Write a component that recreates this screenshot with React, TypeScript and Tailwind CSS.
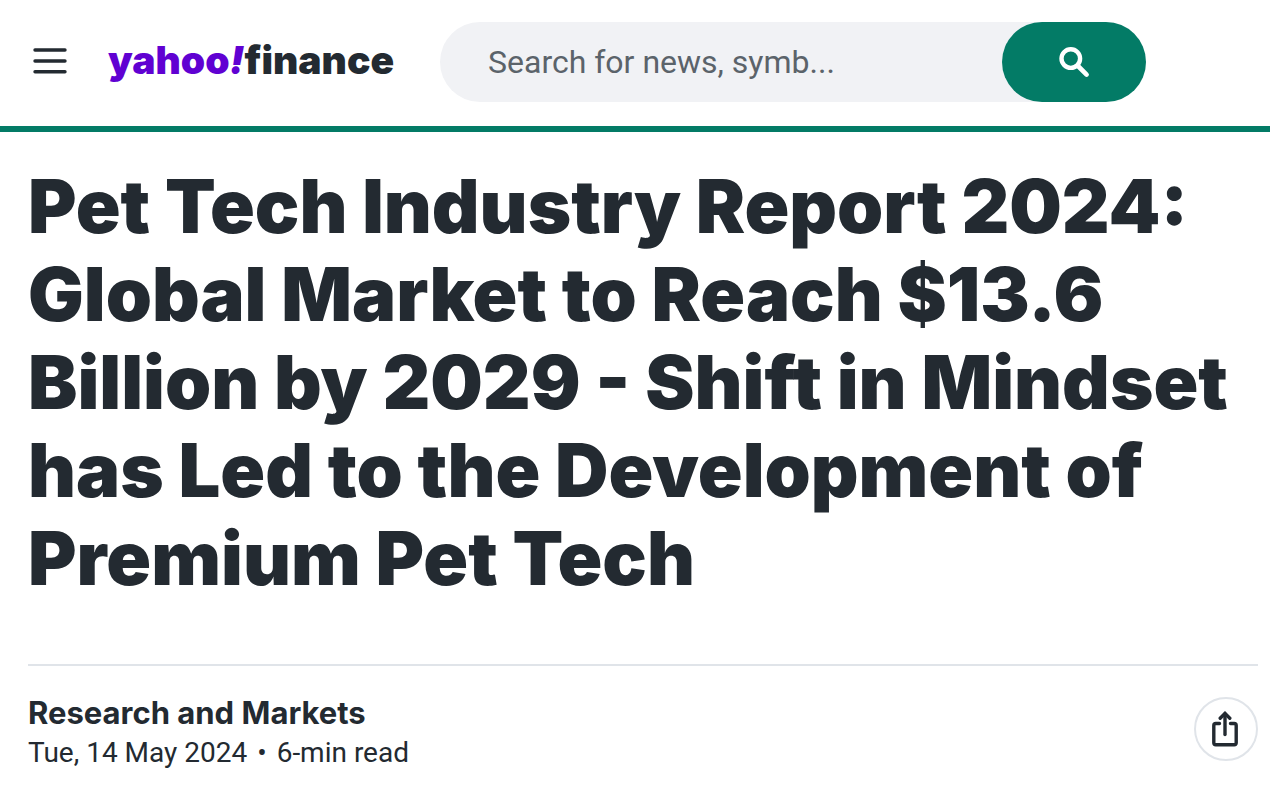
import React from "react";

function Logo() {
  return (
    <a
      href="#"
      aria-label="Yahoo Finance"
      className="ml-10 flex w-[284px] shrink-0 items-baseline pb-1 font-['Inter',sans-serif] text-[39px] leading-12 font-black text-[#232a31]"
    >
      <span className="text-[#6001d2]">yahoo</span>
      <span className="text-[#6001d2] italic">!</span>
      <span>finance</span>
    </a>
  );
}

function Header() {
  return (
    <header className="flex items-center border-b-6 border-[#037b66] pt-[22px] pb-6 pl-8">
      <button type="button" aria-label="Menu" className="shrink-0">
        <svg className="h-9 w-9" viewBox="0 0 36 36" fill="none" stroke="#232a31" strokeWidth={3.4} strokeLinecap="round">
          <path d="M3 6h30M3 17h30M3 27.8h30" />
        </svg>
      </button>
      <Logo />
      <form className="ml-12 flex h-20 w-full max-w-[706px] rounded-full bg-[#f1f2f5]">
        <input
          type="text"
          aria-label="Search"
          placeholder="Search for news, symb..."
          className="min-w-0 flex-1 pl-12 text-[32px] text-[#464e56] outline-none placeholder:text-[#5b636a]"
        />
        <button
          type="submit"
          aria-label="Search"
          className="flex w-36 shrink-0 items-center justify-center rounded-full bg-[#037b66]"
        >
          <svg className="h-8 w-8" viewBox="0 0 32 32" fill="none" stroke="#fff" strokeLinecap="round">
            <circle cx="12.8" cy="12.6" r="9.3" strokeWidth={4.4} />
            <path d="M20 20l8.6 8.6" strokeWidth={4.6} />
          </svg>
        </button>
      </form>
    </header>
  );
}

function App() {
  return (
    <div className="min-h-screen bg-white font-['Roboto',sans-serif] text-[#232a31]">
      <Header />
      <main className="pt-[30px] pr-3 pl-7">
        <h1 className="font-['Inter',sans-serif] text-[74px] leading-[88px] font-black">
          Pet Tech Industry Report 2024:
          <br />
          Global Market to Reach $13.6
          <br />
          Billion by 2029 - Shift in Mindset
          <br />
          has Led to the Development of
          <br />
          Premium Pet Tech
        </h1>
        <div className="mt-[62px] flex items-start justify-between border-t-2 border-[#e0e4e9] pt-[27px]">
          <div>
            <a href="#" className="block font-['Inter',sans-serif] text-[31px] leading-10 font-bold">
              Research and Markets
            </a>
            <p className="flex gap-2.5 text-[28px] leading-10">
              <time dateTime="2024-05-14">Tue, 14 May 2024</time>
              <span>•</span>
              <span>6-min read</span>
            </p>
          </div>
          <button
            type="button"
            aria-label="Share"
            className="mt-1 flex h-16 w-16 items-center justify-center rounded-full border-2 border-[#e0e4e9]"
          >
            <svg className="h-9 w-9" viewBox="0 0 36 36" fill="none" stroke="#232a31" strokeWidth={3.4}>
              <path
                d="M11.5 12.5H7.8a2 2 0 0 0-2 2v17.2a2 2 0 0 0 2 2h18.4a2 2 0 0 0 2-2V14.5a2 2 0 0 0-2-2h-3.7"
                strokeLinecap="round"
              />
              <path d="M17 23.5V3" strokeLinecap="round" />
              <path d="M12.2 7.2L17 2.4l4.8 4.8" strokeLinecap="round" />
            </svg>
          </button>
        </div>
      </main>
    </div>
  );
}

export default App;
